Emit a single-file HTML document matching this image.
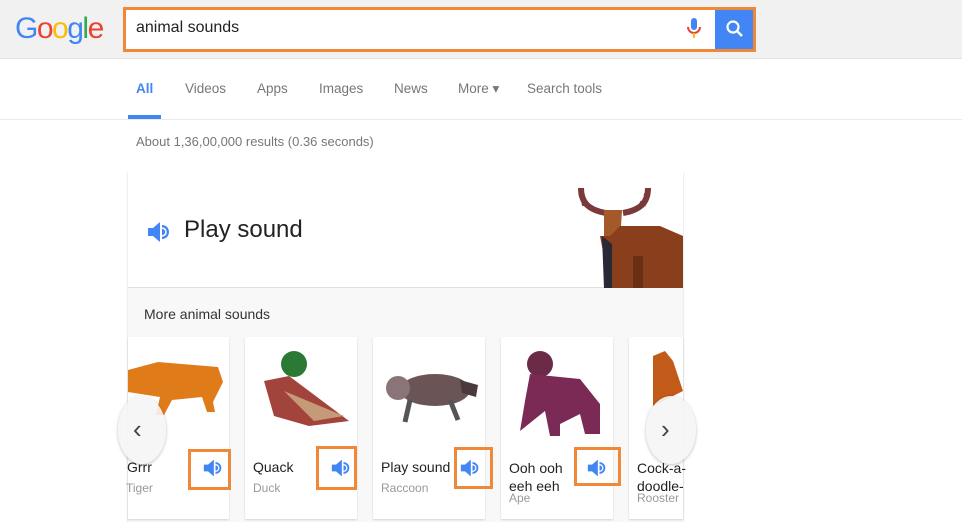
<!DOCTYPE html>
<html><head><meta charset="utf-8"><style>
*{margin:0;padding:0;box-sizing:border-box}
body{width:962px;height:522px;overflow:hidden;background:#fff;font-family:"Liberation Sans",Arial,sans-serif;position:relative}
.abs{position:absolute}
.top{left:0;top:0;width:962px;height:59px;background:#f1f1f1;border-bottom:1px solid #e4e4e4}
.logo{left:15px;top:12px;font-size:30px;letter-spacing:-1.5px}
.sb{left:123px;top:7px;width:633px;height:45px;border:3px solid #f0883a;background:#fff}
.nav{top:81px;font-size:13.5px;color:#777}
.card{left:128px;top:172px;width:555px;height:350px;background:#f8f8f8;box-shadow:0 1px 2px rgba(0,0,0,.2)}
.mc{top:337px;height:182px;background:#fff;box-shadow:0 1px 2px rgba(0,0,0,.15)}
.ob{border:3px solid #f0883a}
.t{font-size:14px;color:#222}
.s{font-size:12px;color:#999}
</style></head><body>
<div class="abs top"></div>
<div class="abs logo"><span style="color:#4285f4">G</span><span style="color:#ea4335">o</span><span style="color:#fbbc05">o</span><span style="color:#4285f4">g</span><span style="color:#34a853">l</span><span style="color:#ea4335">e</span></div>
<div class="abs sb"></div>
<div class="abs" style="left:136px;top:19px;font-size:16px;color:#222">animal sounds</div>
<svg class="abs" style="left:686px;top:17px" width="16" height="22" viewBox="0 0 16 22"><rect x="5" y="1" width="6" height="12" rx="3" fill="#4285f4"/><path d="M2 10a6 6 0 0012 0" stroke="#ea4335" stroke-width="2" fill="none"/><rect x="7" y="16" width="2" height="5" fill="#fbbc05"/></svg>
<div class="abs" style="left:715px;top:10px;width:38px;height:39px;background:#4285f4"></div>
<svg class="abs" style="left:725px;top:19px" width="20" height="20" viewBox="0 0 20 20"><circle cx="8" cy="8" r="5.5" stroke="#fff" stroke-width="2.2" fill="none"/><path d="M12 12l5 5" stroke="#fff" stroke-width="2.5"/></svg>
<div class="abs nav" style="left:136px;color:#4285f4;font-weight:bold">All</div>
<div class="abs" style="left:128px;top:115px;width:33px;height:4px;background:#4285f4"></div>
<div class="abs nav" style="left:185px">Videos</div>
<div class="abs nav" style="left:257px">Apps</div>
<div class="abs nav" style="left:319px">Images</div>
<div class="abs nav" style="left:394px">News</div>
<div class="abs nav" style="left:458px">More ▾</div>
<div class="abs nav" style="left:527px">Search tools</div>
<div class="abs" style="left:0;top:119px;width:962px;height:1px;background:#ebebeb"></div>
<div class="abs" style="left:136px;top:134px;font-size:13px;color:#777">About 1,36,00,000 results (0.36 seconds)</div>
<div class="abs card"></div>
<div class="abs" style="left:128px;top:172px;width:555px;height:116px;background:#fff;border-bottom:1px solid #e0e0e0"></div>
<svg class="abs" style="left:147px;top:220px" width="24" height="24" viewBox="0 0 24 24"><path d="M1 8h5l7-6v20l-7-6H1z" fill="#4285f4"/><path d="M15 5a7 7 0 010 14z" fill="#4285f4"/><path d="M15 8a4 4 0 010 8" stroke="#fff" stroke-width="1.5" fill="none"/></svg>
<div class="abs" style="left:184px;top:216px;font-size:24px;color:#222">Play sound</div>
<svg class="abs" style="left:578px;top:186px" width="105" height="102"><path d="M3 2c0 15 8 22 25 25M70 2c0 15-8 22-25 25" stroke="#7a3a3a" stroke-width="6" fill="none"/><path d="M6 8l-5 2M10 16l-6 3M66 8l5 2M62 16l6 3" stroke="#7a3a3a" stroke-width="3"/><path d="M26 24h18l-2 32-8 8-8-8z" fill="#a5582a"/><path d="M22 50l10 0 10-10 40 0 23 10v52H32z" fill="#8a3f1c"/><path d="M24 50l10 8v44h-8z" fill="#2a2a36"/><rect x="55" y="70" width="10" height="32" fill="#6a2e14"/></svg>
<div class="abs" style="left:144px;top:306px;font-size:14px;color:#333">More animal sounds</div>
<div class="abs mc" style="left:128px;width:101px"></div>
<div class="abs mc" style="left:245px;width:112px"></div>
<div class="abs mc" style="left:373px;width:112px"></div>
<div class="abs mc" style="left:501px;width:112px"></div>
<div class="abs mc" style="left:629px;width:54px"></div>
<svg class="abs" style="left:128px;top:360px" width="100" height="60"><path d="M0 10l30-8 60 5 5 15-10 20 2 10h-8l-5-15-30 3-8 15h-8l4-18-32-5z" fill="#e07b1a"/></svg>
<svg class="abs" style="left:254px;top:346px" width="98" height="90"><circle cx="40" cy="18" r="13" fill="#2a7a35"/><path d="M10 35l25-5 60 45-40 5-35-10z" fill="#a2443c"/><path d="M30 45l60 25-30 5z" fill="#c49a78"/></svg>
<svg class="abs" style="left:380px;top:370px" width="100" height="55"><ellipse cx="55" cy="20" rx="35" ry="16" fill="#6a5456"/><circle cx="18" cy="18" r="12" fill="#8a7478"/><path d="M80 10l18 5-2 12-14-4z" fill="#4a3a3c"/><path d="M30 30l-5 22M70 30l8 20" stroke="#555" stroke-width="5"/></svg>
<svg class="abs" style="left:510px;top:344px" width="95" height="92"><circle cx="30" cy="20" r="13" fill="#6a2a48"/><path d="M20 30l50 5 20 25 0 30-15 0-5-20-20 10 0 12h-10l-5-25-25 20 5-30z" fill="#7a2a55"/></svg>
<svg class="abs" style="left:648px;top:348px" width="35" height="70"><path d="M5 8l12-5 8 10 10 30-30 15z" fill="#c25a1a"/></svg>
<div class="abs" style="left:118px;top:396px;width:48px;height:68px;border-radius:50%;background:rgba(245,245,245,.9);box-shadow:0 1px 3px rgba(0,0,0,.25)"></div>
<div class="abs" style="left:133px;top:414px;font-size:26px;color:#444">‹</div>
<div class="abs" style="left:646px;top:396px;width:50px;height:68px;border-radius:50%;background:rgba(245,245,245,.9);box-shadow:0 1px 3px rgba(0,0,0,.25)"></div>
<div class="abs" style="left:661px;top:414px;font-size:26px;color:#444">›</div>
<div class="abs t" style="left:127px;top:459px">Grrr</div><div class="abs s" style="left:126px;top:481px">Tiger</div>
<div class="abs t" style="left:253px;top:459px">Quack</div><div class="abs s" style="left:253px;top:481px">Duck</div>
<div class="abs t" style="left:381px;top:459px">Play sound</div><div class="abs s" style="left:381px;top:481px">Raccoon</div>
<div class="abs t" style="left:509px;top:459px;line-height:18px">Ooh ooh<br>eeh eeh</div><div class="abs s" style="left:509px;top:491px">Ape</div>
<div class="abs t" style="left:637px;top:459px;line-height:18px">Cock-a-<br>doodle-</div><div class="abs s" style="left:637px;top:491px">Rooster</div>
<div class="abs ob" style="left:188px;top:449px;width:43px;height:41px"></div>
<div class="abs ob" style="left:316px;top:446px;width:41px;height:44px"></div>
<div class="abs ob" style="left:454px;top:447px;width:39px;height:42px"></div>
<div class="abs ob" style="left:574px;top:447px;width:47px;height:39px"></div>
<svg class="abs" style="left:203px;top:458px" width="20" height="20" viewBox="0 0 24 24"><path d="M1 8h5l7-6v20l-7-6H1z" fill="#4285f4"/><path d="M15 5a7 7 0 010 14z" fill="#4285f4"/><path d="M15 8a4 4 0 010 8" stroke="#fff" stroke-width="1.5" fill="none"/></svg>
<svg class="abs" style="left:331px;top:458px" width="20" height="20" viewBox="0 0 24 24"><path d="M1 8h5l7-6v20l-7-6H1z" fill="#4285f4"/><path d="M15 5a7 7 0 010 14z" fill="#4285f4"/><path d="M15 8a4 4 0 010 8" stroke="#fff" stroke-width="1.5" fill="none"/></svg>
<svg class="abs" style="left:460px;top:458px" width="20" height="20" viewBox="0 0 24 24"><path d="M1 8h5l7-6v20l-7-6H1z" fill="#4285f4"/><path d="M15 5a7 7 0 010 14z" fill="#4285f4"/><path d="M15 8a4 4 0 010 8" stroke="#fff" stroke-width="1.5" fill="none"/></svg>
<svg class="abs" style="left:587px;top:458px" width="20" height="20" viewBox="0 0 24 24"><path d="M1 8h5l7-6v20l-7-6H1z" fill="#4285f4"/><path d="M15 5a7 7 0 010 14z" fill="#4285f4"/><path d="M15 8a4 4 0 010 8" stroke="#fff" stroke-width="1.5" fill="none"/></svg>
</body></html>
